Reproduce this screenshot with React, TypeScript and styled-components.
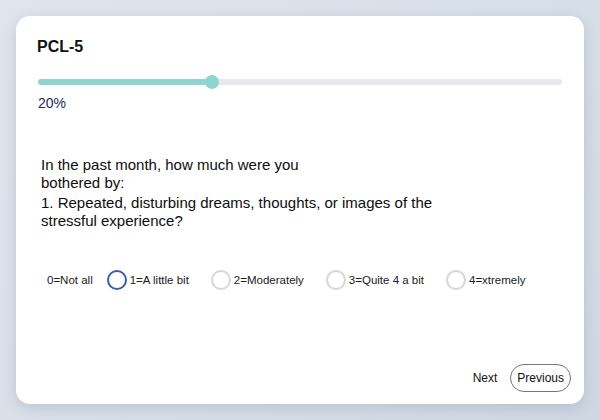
import styled, { createGlobalStyle } from "styled-components";

const options = [
    { label: "1=A little bit", checked: true },
    { label: "2=Moderately", checked: false },
    { label: "3=Quite 4 a bit", checked: false },
    { label: "4=xtremely", checked: false },
];

export default function App() {
    const progress = 33.2;

    return (
        <>
            <GlobalStyle />
            <Page>
                <Card>
                    <Title>PCL-5</Title>

                    <Track>
                        <Fill style={{ width: `${progress}%` }}>
                            <Knob />
                        </Fill>
                    </Track>
                    <Percent>20%</Percent>

                    <Question>
                        <Prompt>In the past month, how much were you<br />bothered by:</Prompt>
                        <Prompt>1. Repeated, disturbing dreams, thoughts, or images of the<br />stressful experience?</Prompt>
                    </Question>

                    <Options>
                        <FirstLabel>0=Not all</FirstLabel>
                        {options.map((option) => (
                            <Option key={option.label}>
                                <Radio $checked={option.checked} />
                                <OptionLabel>{option.label}</OptionLabel>
                            </Option>
                        ))}
                    </Options>

                    <Footer>
                        <TextButton>Next</TextButton>
                        <OutlineButton>Previous</OutlineButton>
                    </Footer>
                </Card>
            </Page>
        </>
    );
}

const GlobalStyle = createGlobalStyle`
    html, body {
        margin: 0;
        padding: 0;
    }
    body {
        font-family: "Liberation Sans", Arial, sans-serif;
        color: #111;
    }
`;

const Page = styled.div`
    width: 600px;
    height: 420px;
    box-sizing: border-box;
    padding: 16px;
    background: linear-gradient(135deg, #dfe5ec 0%, #d6dee7 60%, #cfd8e2 100%);
`;

const Card = styled.div`
    height: 388px;
    box-sizing: border-box;
    display: flex;
    flex-direction: column;
    padding: 21px 13px 12px 22px;
    background: #fff;
    border-radius: 14px;
    box-shadow: 0 4px 14px rgba(60, 80, 110, 0.18);
`;

const Title = styled.h1`
    margin: 0 0 0 -1px;
    font-size: 16px;
    line-height: 20px;
    font-weight: 700;
    color: #111;
`;

const Track = styled.div`
    margin: 22px 9px 0 0;
    height: 6px;
    border-radius: 3px;
    background: #e8e8ee;
`;

const Fill = styled.div`
    position: relative;
    height: 100%;
    border-radius: 3px;
    background: #8fd4cf;
`;

const Knob = styled.span`
    position: absolute;
    right: -7px;
    top: -4px;
    width: 14px;
    height: 14px;
    border-radius: 50%;
    background: #8fd4cf;
`;

const Percent = styled.div`
    margin-top: 10px;
    font-size: 14px;
    line-height: 17px;
    color: #272b5a;
`;

const Question = styled.div`
    margin-top: 44px;
    padding-left: 3px;
    display: flex;
    flex-direction: column;
    gap: 2px;
`;

const Prompt = styled.p`
    margin: 0;
    font-size: 15px;
    line-height: 18px;
    color: #0d0d0d;
`;

const Options = styled.div`
    margin-top: 40px;
    padding-left: 9px;
    display: flex;
    align-items: center;
    gap: 22px;
`;

const Option = styled.label`
    display: flex;
    align-items: center;
    gap: 3px;
`;

const Radio = styled.span<{ $checked: boolean }>`
    width: 20px;
    height: 20px;
    box-sizing: border-box;
    border-radius: 50%;
    border: 2px solid ${(p) => (p.$checked ? "#3b5cae" : "#d6d6d6")};
    background: #fff;
`;

const OptionLabel = styled.span`
    font-size: 11.5px;
    line-height: 16px;
    color: #1a1a1a;
    white-space: nowrap;
`;

const FirstLabel = styled(OptionLabel)`
    margin-right: -8px;
`;

const Footer = styled.div`
    margin-top: auto;
    display: flex;
    justify-content: flex-end;
    align-items: center;
    gap: 13px;
`;

const TextButton = styled.button`
    border: 0;
    background: transparent;
    padding: 0;
    font-family: inherit;
    font-size: 12px;
    color: #111;
`;

const OutlineButton = styled.button`
    height: 28px;
    padding: 0 6px;
    border: 1px solid #777;
    border-radius: 14px;
    background: #fff;
    font-family: inherit;
    font-size: 12px;
    color: #111;
`;
